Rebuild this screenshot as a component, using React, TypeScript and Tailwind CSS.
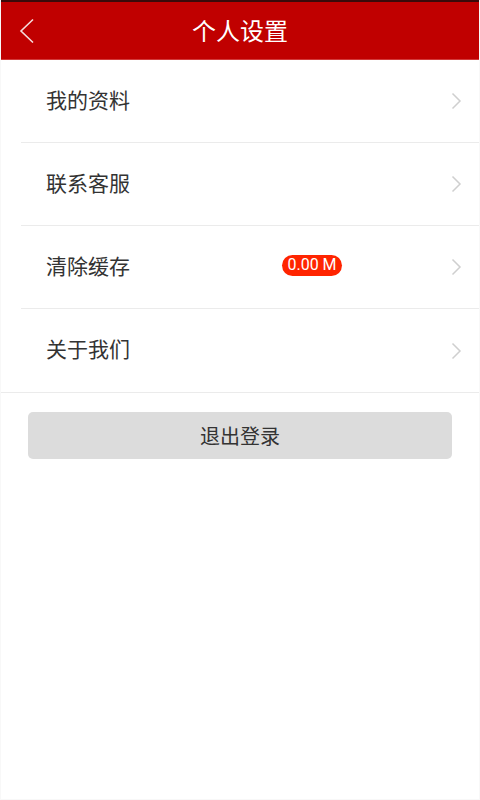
import React from "react";

const font = { fontFamily: '"Noto Sans CJK SC", "Noto Sans", Roboto, sans-serif' };

function Chevron() {
  return (
    <svg width="11" height="18" viewBox="0 0 11 18" className="shrink-0">
      <path d="M1.5 1.5 L9 9 L1.5 16.5" fill="none" stroke="#cfcfcf" strokeWidth="1.5" />
    </svg>
  );
}

function Row({ label, badge, last }: { label: string; badge?: string; last?: boolean }) {
  return (
    <div className={last ? "border-b border-[#ebebeb]" : "pl-5"}>
      <div className={`flex items-center pr-[17px] ${last ? "h-[83px] pl-[45px]" : "h-[83px] pl-[25px] border-b border-[#ebebeb]"}`}>
        <span className="text-[21px] leading-none text-[#333] -translate-y-[2px]">{label}</span>
        <div className="flex-1 flex justify-end pr-[109px]">
          {badge && (
            <span className="flex h-[21px] w-[60px] items-center justify-center rounded-full bg-[#ff2400] text-[16px] leading-none text-white -translate-y-[2px]" style={{ fontFamily: "Roboto, sans-serif" }}>
              {badge}
            </span>
          )}
        </div>
        <Chevron />
      </div>
    </div>
  );
}

export default function App() {
  return (
    <div className="min-h-[800px] w-[480px] bg-white border-x border-b border-[#f8f8f8]" style={font}>
      <div className="h-[2px] bg-[#3a0a0a]" />
      <div className="flex h-[58px] items-center bg-[#c00000] border-b border-[#d23a3a]">
        <div className="pl-[18px] w-[60px]">
          <svg width="16" height="26" viewBox="0 0 16 26">
            <path d="M14 1.5 L2 13 L14 24.5" fill="none" stroke="#f4dcdc" strokeWidth="1.6" />
          </svg>
        </div>
        <div className="flex-1 text-center text-[24px] leading-none text-white -ml-[60px]">
          <span className="inline-block -translate-y-[1px]">个人设置</span>
        </div>
      </div>
      <Row label="我的资料" />
      <Row label="联系客服" />
      <Row label="清除缓存" badge="0.00 M" />
      <Row label="关于我们" last />
      <div className="px-[27px] pt-[19px]">
        <button className="flex h-[47px] w-full items-center justify-center rounded-[5px] bg-[#dcdcdc] text-[20px] leading-none text-[#333]">
          退出登录
        </button>
      </div>
    </div>
  );
}
